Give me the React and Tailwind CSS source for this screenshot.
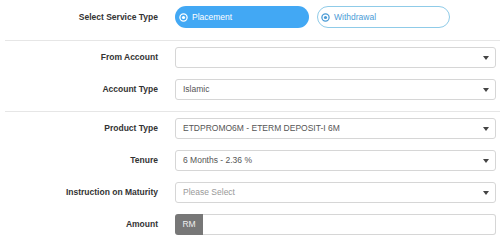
import React from "react";

function Caret() {
  return (
    <svg width="6" height="4" viewBox="0 0 6 4" className="shrink-0">
      <path d="M0 0 L6 0 L3 4 Z" fill="#444" />
    </svg>
  );
}

function RadioDot({ color }) {
  return (
    <svg width="9" height="9" viewBox="0 0 10 10" className="shrink-0">
      <circle cx="5" cy="5" r="4" fill="none" stroke={color} strokeWidth="1.4" />
      <circle cx="5" cy="5" r="1.8" fill={color} />
    </svg>
  );
}

function Label({ children }) {
  return (
    <div className="w-[158px] shrink-0 text-right text-[8.5px] font-bold text-[#333] leading-none">
      {children}
    </div>
  );
}

function SelectBox({ value, placeholder }) {
  return (
    <div className="ml-[17px] mr-[4px] flex h-[21px] flex-1 items-center justify-between rounded-[3px] border border-[#d6d6d6] bg-white pl-[7px] pr-[6px]">
      <span className={`text-[8.5px] leading-none ${placeholder ? "text-[#999]" : "text-[#555]"}`}>
        {value}
      </span>
      <Caret />
    </div>
  );
}

function Row({ label, children, className = "" }) {
  return (
    <div className={`flex items-center ${className}`}>
      <Label>{label}</Label>
      {children}
    </div>
  );
}

export default function App() {
  return (
    <div className="h-[244px] w-[500px] overflow-hidden bg-white font-['Liberation_Sans',Arial,sans-serif]">
      {/* service type */}
      <Row label="Select Service Type" className="pt-[6px]">
        <div className="ml-[17px] flex gap-[8px]">
          <div className="flex h-[22px] w-[134px] items-center gap-[4px] rounded-full bg-[#42a8f4] pl-[4px] text-[8.5px] text-white">
            <RadioDot color="#ffffff" />
            <span>Placement</span>
          </div>
          <div className="flex h-[22px] w-[133px] items-center gap-[4px] rounded-full border border-[#8fcbe8] pl-[3px] text-[8.5px] text-[#4a9bd6]">
            <RadioDot color="#4a9bd6" />
            <span>Withdrawal</span>
          </div>
        </div>
      </Row>

      <div className="ml-[5px] mt-[12px] h-px bg-[#e6e6e6]" />

      <div className="mt-[6px] flex flex-col gap-[11px]">
        <Row label="From Account">
          <SelectBox value="" />
        </Row>
        <Row label="Account Type">
          <SelectBox value="Islamic" />
        </Row>
      </div>

      <div className="ml-[5px] mt-[11px] h-px bg-[#e6e6e6]" />

      <div className="mt-[6px] flex flex-col gap-[11px]">
        <Row label="Product Type">
          <SelectBox value="ETDPROMO6M - ETERM DEPOSIT-I 6M" />
        </Row>
        <Row label="Tenure">
          <SelectBox value="6 Months - 2.36 %" />
        </Row>
        <Row label="Instruction on Maturity">
          <SelectBox value="Please Select" placeholder />
        </Row>
        <Row label="Amount">
          <div className="ml-[17px] mr-[4px] flex h-[21px] flex-1">
            <div className="flex w-[28px] items-center justify-center rounded-l-[3px] bg-[#777] text-[8.5px] text-[#eee]">
              RM
            </div>
            <div className="flex-1 rounded-r-[3px] border border-l-0 border-[#d6d6d6] bg-white" />
          </div>
        </Row>
      </div>
    </div>
  );
}
